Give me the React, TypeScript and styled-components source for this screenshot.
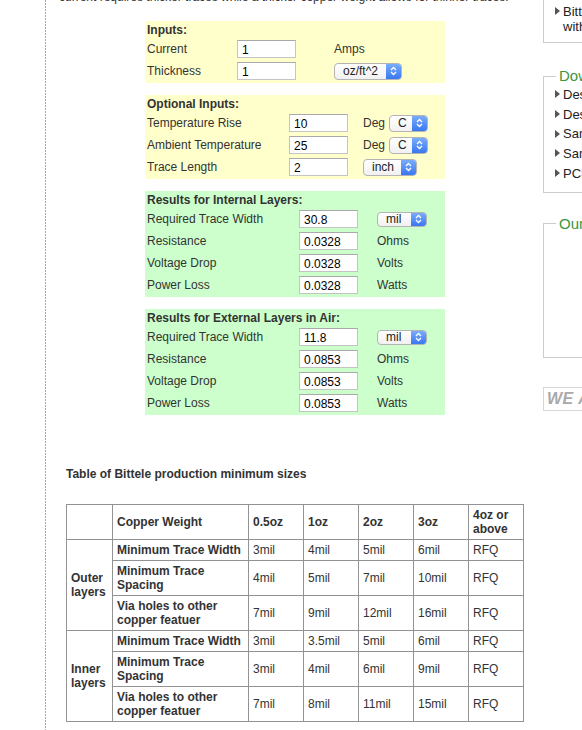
import React from 'react'
import styled, { createGlobalStyle } from 'styled-components'

const GlobalStyle = createGlobalStyle`
  html, body {
    margin: 0;
    padding: 0;
    background: #fff;
    overflow: hidden;
  }
  body {
    font-family: "Liberation Sans", Arial, sans-serif;
    font-size: 12px;
    color: #333;
  }
`

const Page = styled.div`
  display: flex;
  width: 800px;
  min-height: 730px;
`

const Gutter = styled.div`
  width: 45px;
  flex-shrink: 0;
`

const Main = styled.main`
  width: 484px;
  flex-shrink: 0;
  margin-right: 13px;
  padding-left: 1px;
  background: linear-gradient(#a8a8a8 66%, transparent 0) left top / 1px 3px repeat-y;
`

const Intro = styled.p`
  margin: -12px 0 0 13px;
  line-height: 18px;
  white-space: nowrap;
`

const Panel = styled.div<{ $bg: string }>`
  width: 300px;
  margin: 12px 0 0 99px;
  padding: 0 0 1px 2px;
  box-sizing: border-box;
  background: ${p => p.$bg};

  &:first-of-type {
    margin-top: 15px;
  }
`

const PanelTitle = styled.div`
  height: 17px;
  line-height: 18px;
  font-weight: bold;
`

const Row = styled.div<{ $cols: string }>`
  display: grid;
  grid-template-columns: ${p => p.$cols};
  height: 22px;
  align-items: center;
`

const Field = styled.input`
  box-sizing: border-box;
  width: 59px;
  height: 18px;
  margin: 0;
  padding: 1px 4px 0;
  border: 1px solid #c4c4c4;
  border-top-color: #a9a9a9;
  background: #fff;
  font-family: "Liberation Sans", Arial, sans-serif;
  font-size: 12px;
  color: #000;
  outline: none;
`

const Unit = styled.div`
  display: flex;
  align-items: center;
  gap: 4px;
`

const SelectBox = styled.span<{ $w: number; $h: number }>`
  display: inline-flex;
  align-items: center;
  box-sizing: border-box;
  width: ${p => p.$w}px;
  height: ${p => p.$h}px;
  padding-left: 8px;
  border: 1px solid #b4b4b4;
  border-radius: 4px;
  overflow: hidden;
  background: linear-gradient(#ffffff, #f1f1f1);
  color: #222;
  font-size: 12px;
`

const SelectArrow = styled.span`
  display: flex;
  align-items: center;
  justify-content: center;
  width: 15px;
  align-self: stretch;
  margin-left: auto;
  background: linear-gradient(#79acfb, #3a77f1);
`

const Chevrons = () => (
  <svg width="7" height="10" viewBox="0 0 7 10">
    <path d="M1 4 L3.5 1.5 L6 4 M1 6 L3.5 8.5 L6 6" fill="none" stroke="#fff" strokeWidth="1.3" />
  </svg>
)

const Select = ({ value, w, h = 17 }: { value: string; w: number; h?: number }) => (
  <SelectBox $w={w} $h={h}>
    {value}
    <SelectArrow>
      <Chevrons />
    </SelectArrow>
  </SelectBox>
)

const TableTitle = styled.div`
  margin: 51px 0 0 20px;
  line-height: 16px;
  font-weight: bold;
`

const SizeTable = styled.table`
  margin: 22px 0 0 20px;
  width: 458px;
  table-layout: fixed;
  border-collapse: collapse;
  border: 1px solid #939393;
  color: #333;

  td {
    border: 1px solid #939393;
    padding: 3px 4px;
    line-height: 14px;
    vertical-align: middle;
    text-align: left;
  }
`

const Head = styled.td`
  font-weight: bold;
`

const Sidebar = styled.aside`
  width: 220px;
  flex-shrink: 0;
  font-size: 13px;
`

const TopBox = styled.div`
  border: 1px solid #ccc;
  border-top: none;
  padding: 4px 0 8px 11px;
`

const SideItem = styled.div<{ $lh: number }>`
  display: flex;
  align-items: flex-start;
  gap: 3px;
  line-height: ${p => p.$lh}px;
  color: #222;
  white-space: nowrap;
`

const Triangle = styled.span<{ $lh: number }>`
  flex-shrink: 0;
  width: 0;
  height: 0;
  margin-top: ${p => (p.$lh - 9) / 2}px;
  border-left: 5px solid #555;
  border-top: 4.5px solid transparent;
  border-bottom: 4.5px solid transparent;
`

const Box = styled.fieldset<{ $top: number }>`
  margin: ${p => p.$top}px 0 0;
  padding: 0;
  border: 1px solid #ccc;
  min-width: 0;
`

const Legend = styled.legend`
  margin-left: 12px;
  padding: 0 3px;
  font-size: 15px;
  line-height: 16px;
  color: #3c963c;
`

const BoxList = styled.div<{ $minH?: number }>`
  padding: 1px 0 8px 11px;
  min-height: ${p => p.$minH ?? 0}px;
`

const Badge = styled.div`
  margin-top: 29px;
  height: 24px;
  box-sizing: border-box;
  border: 1px solid #d6d6d6;
  padding-left: 3px;
  line-height: 22px;
  font-size: 16px;
  font-weight: bold;
  font-style: italic;
  color: #a9a9a9;
  letter-spacing: 0.5px;
  white-space: nowrap;
`

const Item = ({ children, lh }: { children: React.ReactNode; lh: number }) => (
  <SideItem $lh={lh}>
    <Triangle $lh={lh} />
    <span>{children}</span>
  </SideItem>
)

const downloads = [
  'Design Guidelines for PCB',
  'Design for Assembly',
  'Sample BOM file',
  'Sample Centroid file',
  'PCB Capabilities'
]

const sizeRows = [
  ['Minimum Trace Width', '3mil', '4mil', '5mil', '6mil', 'RFQ'],
  ['Minimum Trace Spacing', '4mil', '5mil', '7mil', '10mil', 'RFQ'],
  ['Via holes to other copper featuer', '7mil', '9mil', '12mil', '16mil', 'RFQ']
]

const innerRows = [
  ['Minimum Trace Width', '3mil', '3.5mil', '5mil', '6mil', 'RFQ'],
  ['Minimum Trace Spacing', '3mil', '4mil', '6mil', '9mil', 'RFQ'],
  ['Via holes to other copper featuer', '7mil', '8mil', '11mil', '15mil', 'RFQ']
]

const results = (title: string, width: string, vals: string) => (
  <Panel $bg="#ccffcc">
    <PanelTitle>{title}</PanelTitle>
    <Row $cols="152px 78px auto">
      <span>Required Trace Width</span>
      <Field readOnly value={width} />
      <span><Select value="mil" w={50} h={15} /></span>
    </Row>
    <Row $cols="152px 78px auto">
      <span>Resistance</span>
      <Field readOnly value={vals} />
      <span>Ohms</span>
    </Row>
    <Row $cols="152px 78px auto">
      <span>Voltage Drop</span>
      <Field readOnly value={vals} />
      <span>Volts</span>
    </Row>
    <Row $cols="152px 78px auto">
      <span>Power Loss</span>
      <Field readOnly value={vals} />
      <span>Watts</span>
    </Row>
  </Panel>
)

const layerRows = (label: string, rows: string[][]) =>
  rows.map((r, i) => (
    <tr key={label + i}>
      {i === 0 && <Head rowSpan={3}>{label}</Head>}
      <Head>{r[0]}</Head>
      {r.slice(1).map((v, j) => (
        <td key={j}>{v}</td>
      ))}
    </tr>
  ))

export default function App() {
  return (
    <Page>
      <GlobalStyle />
      <Gutter />
      <Main>
        <Intro>current requires thicker traces while a thicker copper weight allows for thinner traces.</Intro>

        <Panel $bg="#ffffcc">
          <PanelTitle>Inputs:</PanelTitle>
          <Row $cols="90px 97px auto">
            <span>Current</span>
            <Field readOnly value="1" />
            <span>Amps</span>
          </Row>
          <Row $cols="90px 97px auto">
            <span>Thickness</span>
            <Field readOnly value="1" />
            <span><Select value="oz/ft^2" w={68} /></span>
          </Row>
        </Panel>

        <Panel $bg="#ffffcc">
          <PanelTitle>Optional Inputs:</PanelTitle>
          <Row $cols="142px 74px auto">
            <span>Temperature Rise</span>
            <Field readOnly value="10" />
            <Unit>Deg <Select value="C" w={39} /></Unit>
          </Row>
          <Row $cols="142px 74px auto">
            <span>Ambient Temperature</span>
            <Field readOnly value="25" />
            <Unit>Deg <Select value="C" w={39} /></Unit>
          </Row>
          <Row $cols="142px 74px auto">
            <span>Trace Length</span>
            <Field readOnly value="2" />
            <Unit><Select value="inch" w={54} /></Unit>
          </Row>
        </Panel>

        {results('Results for Internal Layers:', '30.8', '0.0328')}
        {results('Results for External Layers in Air:', '11.8', '0.0853')}

        <TableTitle>Table of Bittele production minimum sizes</TableTitle>
        <SizeTable>
          <colgroup>
            <col style={{ width: 46 }} />
            <col style={{ width: 136 }} />
            <col style={{ width: 55 }} />
            <col style={{ width: 55 }} />
            <col style={{ width: 55 }} />
            <col style={{ width: 55 }} />
            <col style={{ width: 55 }} />
          </colgroup>
          <tbody>
            <tr>
              <td />
              <Head>Copper Weight</Head>
              <Head>0.5oz</Head>
              <Head>1oz</Head>
              <Head>2oz</Head>
              <Head>3oz</Head>
              <Head>4oz or above</Head>
            </tr>
            {layerRows('Outer layers', sizeRows)}
            {layerRows('Inner layers', innerRows)}
          </tbody>
        </SizeTable>
      </Main>

      <Sidebar>
        <TopBox>
          <Item lh={15}>
            Bittele turnkey PCB assembly
            <br />
            with fast turnaround
          </Item>
        </TopBox>
        <Box $top={25}>
          <Legend>Downloads</Legend>
          <BoxList>
            {downloads.map(d => (
              <Item key={d} lh={19.7}>{d}</Item>
            ))}
          </BoxList>
        </Box>
        <Box $top={23}>
          <Legend>Our Customers</Legend>
          <BoxList $minH={116} />
        </Box>
        <Badge>WE ACCEPT</Badge>
      </Sidebar>
    </Page>
  )
}
